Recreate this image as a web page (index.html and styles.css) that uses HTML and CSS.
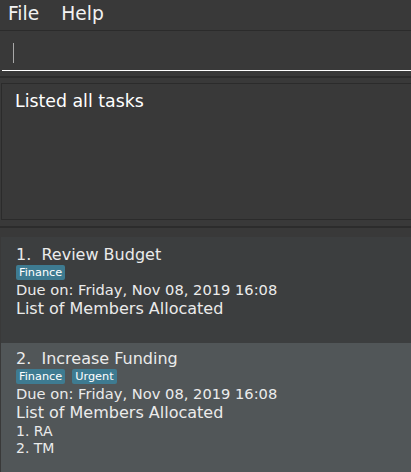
FILE: index.html
```html
<!DOCTYPE html>
<html>
<head>
<meta charset="utf-8">
<link rel="stylesheet" href="styles.css">
</head>
<body>
<div class="app">
  <div class="menubar">
    <span class="menu-item">File</span>
    <span class="menu-item">Help</span>
  </div>
  <div class="command">
    <div class="command-field"><span class="caret"></span></div>
  </div>
  <div class="gap"></div>
  <div class="divider"></div>
  <div class="gap"></div>
  <div class="result">
    <div class="result-text">Listed all tasks</div>
  </div>
  <div class="gap gap-6"></div>
  <div class="divider"></div>
  <div class="list">
    <div class="card card-even">
      <div class="title">1.&nbsp; Review Budget</div>
      <div class="tags"><span class="tag">Finance</span></div>
      <div class="due">Due on: Friday, Nov 08, 2019 16:08</div>
      <div class="members-label">List of Members Allocated</div>
    </div>
    <div class="card card-odd">
      <div class="title">2.&nbsp; Increase Funding</div>
      <div class="tags"><span class="tag">Finance</span><span class="tag">Urgent</span></div>
      <div class="due">Due on: Friday, Nov 08, 2019 16:08</div>
      <div class="members-label">List of Members Allocated</div>
      <div class="member">1. RA</div>
      <div class="member">2. TM</div>
    </div>
  </div>
</div>
</body>
</html>
```
FILE: styles.css
```css
html, body {
  margin: 0;
  padding: 0;
}
body {
  width: 411px;
  height: 472px;
  overflow: hidden;
  background: #393939;
  font-family: "DejaVu Sans", sans-serif;
}
.app {
  display: flex;
  flex-direction: column;
  height: 472px;
}
.menubar {
  display: flex;
  gap: 7px;
  height: 30px;
  border-bottom: 1px solid #2b2b2b;
  flex: none;
}
.menu-item {
  font-size: 18.67px;
  line-height: 27px;
  color: #f2f2f2;
  padding: 0 7px 0 8px;
}
.command {
  height: 40px;
  flex: none;
  padding-left: 2px;
}
.command-field {
  height: 39px;
  border-bottom: 1px solid #ffffff;
  display: flex;
  align-items: flex-start;
}
.caret {
  display: block;
  width: 1px;
  height: 20px;
  margin-top: 12px;
  margin-left: 11px;
  background: #a8a8a8;
}
.gap {
  height: 5px;
  flex: none;
}
.gap-6 {
  height: 6px;
}
.divider {
  height: 2px;
  background: #2c2c2c;
  flex: none;
}
.result {
  flex: none;
  height: 135px;
  margin-left: 1px;
  border: 1px solid #2b2b2b;
  border-right: none;
}
.result-text {
  font-size: 17.33px;
  line-height: 20px;
  color: #ffffff;
  padding: 7px 0 0 13px;
}
.list {
  flex: 1;
  padding-top: 9px;
  display: flex;
  flex-direction: column;
}
.card {
  padding: 6px 0 0 15px;
  margin-left: 1px;
  color: #ebebeb;
}
.card-even {
  background: #3c3e3f;
  height: 98px;
  padding-top: 8px;
  flex: none;
}
.card-odd {
  background: #515658;
  flex: 1;
}
.title {
  font-size: 16px;
  line-height: 20px;
}
.tags {
  display: flex;
  gap: 7px;
  height: 15px;
}
.tag {
  font-size: 11.3px;
  line-height: 15px;
  padding: 0 3px;
  background: #3e7b91;
  color: #ffffff;
  border-radius: 2px;
}
.due {
  font-size: 14.67px;
  line-height: 18px;
  margin-top: 1px;
}
.members-label {
  font-size: 16px;
  line-height: 20px;
}
.member {
  font-size: 14px;
  line-height: 16.5px;
}
```
